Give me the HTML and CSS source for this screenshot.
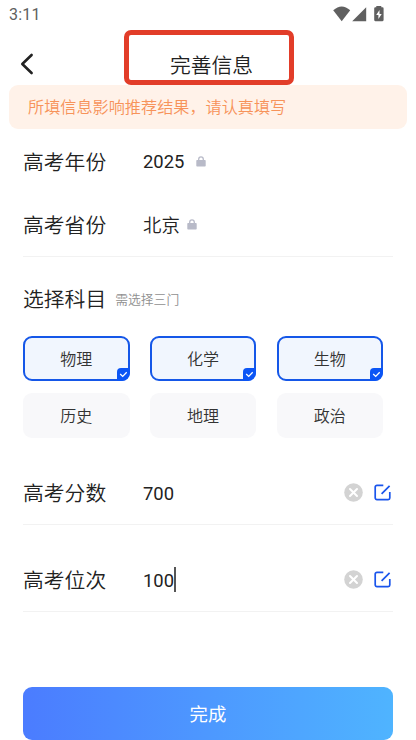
FILE: index.html
```html
<!DOCTYPE html>
<html lang="zh-CN">
<head>
<meta charset="utf-8">
<title>完善信息</title>
<link rel="stylesheet" href="styles.css">
</head>
<body>
<svg class="defs" aria-hidden="true">
  <symbol id="lock" viewBox="0 0 10 11"><path d="M2.7 5V3.2a2.3 2.3 0 0 1 4.6 0V5" fill="none" stroke="#b8bac8" stroke-width="1.3"/><rect x=".3" y="3.9" width="9.4" height="6.7" rx=".8" fill="#b8bac8"/></symbol>
  <symbol id="clear" viewBox="0 0 19 19"><circle cx="9.5" cy="9.5" r="9.3" fill="#d3d3d3"/><path d="M6 6l7 7M13 6l-7 7" stroke="#fff" stroke-width="2" stroke-linecap="round"/></symbol>
  <symbol id="edit" viewBox="0 0 17 17"><path d="M9.3 1.3H3a1.8 1.8 0 0 0-1.8 1.8v10.7A1.8 1.8 0 0 0 3 15.6h11.2a1.6 1.6 0 0 0 1.6-1.6V8M7.6 9.9l8-8" fill="none" stroke="#1a55ec" stroke-width="1.7"/></symbol>
  <symbol id="check" viewBox="0 0 13 13"><path d="M3.2 6l2.5 2.4 4-4.2" fill="none" stroke="#fff" stroke-width="1.3"/></symbol>
</svg>
<div class="app">
  <div class="status">
    <span class="time">3:11</span>
    <svg class="signals" width="54" height="18" viewBox="0 0 54 18" fill="#606060">
      <path d="M.2 5.2Q8.7-2.4 17.2 5.2L8.7 16.2Z"/>
      <path d="M33.2 2.2V16.2H19.2Z"/>
      <path fill-rule="evenodd" d="M43.3 2.3V1h5v1.3h1.2q1.1 0 1.1 1.1v11.7q0 1.1-1.1 1.1h-7.2q-1.1 0-1.1-1.1V3.4q0-1.1 1.1-1.1ZM46.5 5L43.2 10h2.2v4L48.7 9h-2.2Z"/>
    </svg>
  </div>
  <header class="header">
    <svg class="back" width="14" height="22" viewBox="0 0 14 22"><path d="M11.6 2L2.3 11l9.3 9" fill="none" stroke="#222" stroke-width="2.6" stroke-linecap="round" stroke-linejoin="round"/></svg>
    <h1 class="title">完善信息</h1>
    <div class="highlight"></div>
  </header>
  <div class="notice">所填信息影响推荐结果，请认真填写</div>
  <main class="form">
    <div class="row"><span class="label">高考年份</span><span class="value">2025</span><svg class="lock lock-year"><use href="#lock"/></svg></div>
    <div class="row lined"><span class="label">高考省份</span><span class="value province">北京</span><svg class="lock"><use href="#lock"/></svg></div>
    <div class="section"><span class="label-inline">选择科目</span><span class="hint">需选择三门</span></div>
    <div class="subjects">
      <div class="chip selected">物理<svg class="tick"><use href="#check"/></svg></div>
      <div class="chip selected">化学<svg class="tick"><use href="#check"/></svg></div>
      <div class="chip selected">生物<svg class="tick"><use href="#check"/></svg></div>
      <div class="chip">历史</div>
      <div class="chip">地理</div>
      <div class="chip">政治</div>
    </div>
    <div class="row lined entry"><span class="label">高考分数</span><span class="value">700</span><span class="actions"><svg class="clear"><use href="#clear"/></svg><svg class="edit"><use href="#edit"/></svg></span></div>
    <div class="row lined entry"><span class="label">高考位次</span><span class="value">100</span><i class="caret"></i><span class="actions"><svg class="clear"><use href="#clear"/></svg><svg class="edit"><use href="#edit"/></svg></span></div>
    <button class="submit">完成</button>
  </main>
</div>
</body>
</html>
```
FILE: styles.css
```css
* { box-sizing: border-box; }
body {
  margin: 0;
  background: #fff;
  color: #222;
  font-family: Roboto, "Noto Sans CJK SC", sans-serif;
  font-weight: 350;
}
svg { display: block; flex: none; }
.defs { display: none; }
.app { height: 740px; overflow: hidden; }
.status {
  height: 28px;
  padding: 0 29px 0 9px;
  display: flex;
  align-items: center;
  justify-content: space-between;
  color: #606060;
}
.time { padding-top: 2px; font-size: 16px; font-weight: 400; line-height: 28px; letter-spacing: .2px; }
.signals { margin-top: -1px; }
.header {
  position: relative;
  height: 57px;
  padding: 14px 20px 0;
  display: flex;
  align-items: center;
}
.title {
  flex: 1;
  margin: 4px 7px 0 0;
  text-align: center;
  font-size: 20.8px;
  font-weight: 350;
  line-height: 40px;
}
.highlight {
  position: absolute;
  left: 124px;
  top: 2px;
  width: 170px;
  height: 55px;
  border: 5px solid #e23d29;
  border-radius: 7px;
}
.notice {
  margin: 0 9px;
  height: 44px;
  padding: 1px 0 0 19px;
  border-radius: 9px;
  background: #fff2e9;
  color: #f7935a;
  font-size: 16.15px;
  line-height: 44px;
}
.form { padding: 1px 23px 0; }
.row { height: 63px; display: flex; align-items: center; }
.lined { height: 64px; border-bottom: 1px solid #f2f2f2; }
.label { width: 120px; padding-bottom: 2px; font-size: 20.8px; }
.value { font-size: 18.4px; font-weight: 400; }
.province { padding-bottom: 2px; font-weight: 350; }
.lock { width: 10px; height: 11px; margin: 0 0 1px 7px; }
.lock-year { margin-left: 12px; }
.section { margin-top: 22px; height: 40px; display: flex; align-items: center; }
.label-inline { padding-bottom: 2px; font-size: 20.8px; }
.hint { margin-left: 9px; padding-bottom: 2px; font-size: 12.8px; color: #909090; }
.subjects {
  margin-top: 17px;
  display: grid;
  grid-template-columns: repeat(3, 106.5px);
  gap: 12px 20.3px;
}
.chip {
  position: relative;
  height: 45px;
  padding-top: 1px;
  border-radius: 9px;
  background: #f8f8fa;
  color: #333;
  font-size: 16px;
  line-height: 45px;
  text-align: center;
}
.selected {
  padding-top: 0;
  border: 2px solid #1557e8;
  background: #f1f6fe;
  line-height: 43px;
}
.tick {
  position: absolute;
  right: -2px;
  bottom: -2px;
  width: 13px;
  height: 13px;
  border-radius: 4px 0 8px 0;
  background: #0b55f5;
}
.entry { margin-top: 23px; }
.entry .value { padding-top: 1px; }
.caret { width: 2px; height: 25px; background: #555; }
.actions { margin-left: auto; display: flex; align-items: center; gap: 11px; }
.clear { width: 19px; height: 19px; }
.edit { width: 17px; height: 17px; margin-right: 2px; }
.submit {
  display: block;
  width: 370px;
  height: 53px;
  margin-top: 75px;
  padding: 3px 0 0;
  border: 0;
  border-radius: 9px;
  background: linear-gradient(90deg, #4b7cff, #4fb4ff);
  color: #fff;
  font-family: inherit;
  font-size: 18.4px;
  line-height: 50px;
}
```
